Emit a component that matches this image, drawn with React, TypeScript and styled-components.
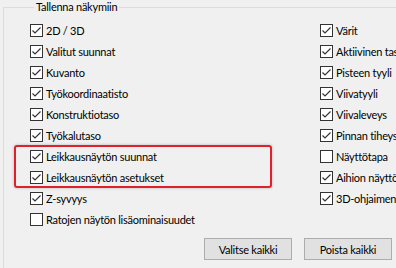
import React from 'react'
import styled, { createGlobalStyle } from 'styled-components'

const FONT = `Lato, "Liberation Sans", Arial, sans-serif`

const GlobalStyle = createGlobalStyle`
  html, body {
    margin: 0;
    padding: 0;
    background: #f0f0f0;
    overflow: hidden;
  }
  body {
    font-family: ${FONT};
    font-size: 11px;
    letter-spacing: -0.25px;
    color: #000;
  }
`

const Page = styled.div`
  position: relative;
  width: 396px;
  height: 268px;
  overflow: hidden;
  padding: 0 0 0 3px;
  box-sizing: border-box;
`

const GroupBox = styled.fieldset`
  margin: 0;
  padding: 6px 0 0 26px;
  width: 440px;
  height: 320px;
  border: 1px solid #dcdcdc;
  border-radius: 0;
  box-sizing: border-box;
`

const Legend = styled.legend`
  margin-left: 4px;
  padding: 0 2px;
  line-height: 14px;
`

const Columns = styled.div`
  display: grid;
  grid-template-columns: 290px 1fr;
`

const Column = styled.div`
  display: flex;
  flex-direction: column;
`

const Row = styled.label`
  display: flex;
  align-items: center;
  height: 21px;
  white-space: nowrap;
`

const Box = styled.span`
  display: inline-flex;
  align-items: center;
  justify-content: center;
  width: 13px;
  height: 13px;
  box-sizing: border-box;
  border: 1px solid #333;
  background: #fff;
  margin-right: 3px;
  flex: none;
`

const Buttons = styled.div`
  display: flex;
  gap: 12px;
  margin: 8px 0 0 174px;
`

const Button = styled.button`
  width: 88px;
  height: 22px;
  padding: 0;
  border: 1px solid #adadad;
  background: #e1e1e1;
  font-family: ${FONT};
  font-size: 11px;
  letter-spacing: -0.25px;
  color: #000;
`

const Highlight = styled.div`
  position: absolute;
  left: 14px;
  top: 145px;
  width: 258px;
  height: 43px;
  box-sizing: border-box;
  border: 2px solid #e0202a;
  border-radius: 3px;
  box-shadow: 0 0 3px rgba(0, 0, 0, 0.25);
  pointer-events: none;
`

type Item = { label: string; checked: boolean }

const left: Item[] = [
  { label: '2D / 3D', checked: true },
  { label: 'Valitut suunnat', checked: true },
  { label: 'Kuvanto', checked: true },
  { label: 'Työkoordinaatisto', checked: true },
  { label: 'Konstruktiotaso', checked: true },
  { label: 'Työkalutaso', checked: true },
  { label: 'Leikkausnäytön suunnat', checked: true },
  { label: 'Leikkausnäytön asetukset', checked: true },
  { label: 'Z-syvyys', checked: true },
  { label: 'Ratojen näytön lisäominaisuudet', checked: false },
]

const right: Item[] = [
  { label: 'Värit', checked: true },
  { label: 'Aktiivinen taso', checked: true },
  { label: 'Pisteen tyyli', checked: true },
  { label: 'Viivatyyli', checked: true },
  { label: 'Viivaleveys', checked: true },
  { label: 'Pinnan tiheys', checked: true },
  { label: 'Näyttötapa', checked: false },
  { label: 'Aihion näyttötapa', checked: true },
  { label: '3D-ohjaimen asetukset', checked: true },
]

const Check = ({ checked }: { checked: boolean }) => (
  <Box>
    {checked && (
      <svg width="11" height="11" viewBox="0 0 11 11">
        <polyline
          points="1.5,5.5 4,8 9.5,2.5"
          fill="none"
          stroke="#333"
          strokeWidth="1.2"
        />
      </svg>
    )}
  </Box>
)

const List = ({ items }: { items: Item[] }) => (
  <Column>
    {items.map((it) => (
      <Row key={it.label}>
        <Check checked={it.checked} />
        {it.label}
      </Row>
    ))}
  </Column>
)

export default function App() {
  return (
    <Page>
      <GlobalStyle />
      <GroupBox>
        <Legend>Tallenna näkymiin</Legend>
        <Columns>
          <List items={left} />
          <List items={right} />
        </Columns>
        <Buttons>
          <Button>Valitse kaikki</Button>
          <Button>Poista kaikki</Button>
        </Buttons>
      </GroupBox>
      <Highlight />
    </Page>
  )
}
